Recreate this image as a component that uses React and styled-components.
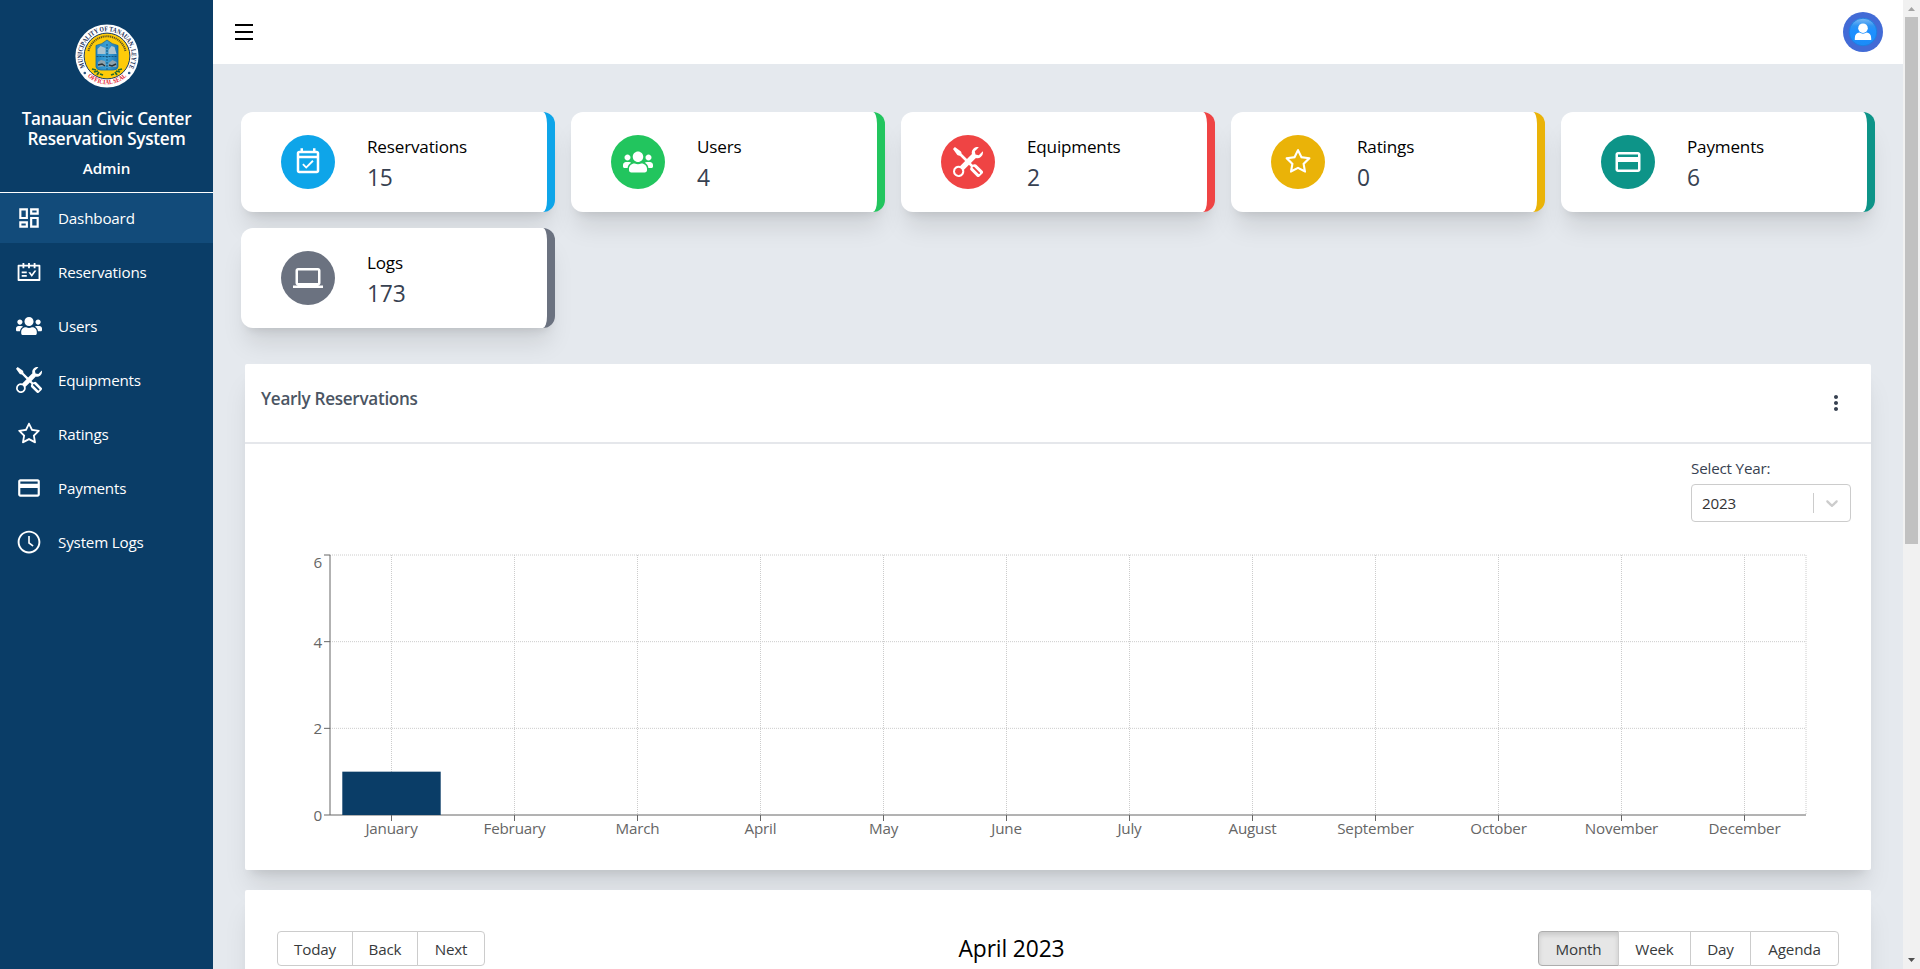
import React from "react";
import styled, { createGlobalStyle, css } from "styled-components";
import { MdOutlineDashboard, MdPayment, MdOutlineEventAvailable, MdLaptop, MdMoreVert } from "react-icons/md";
import { AiOutlineSchedule, AiOutlineStar, AiOutlineClockCircle } from "react-icons/ai";
import { FaUsers } from "react-icons/fa";
import { BsTools } from "react-icons/bs";
import { RiMenuLine } from "react-icons/ri";

const GlobalStyle = createGlobalStyle`
  *, *::before, *::after { box-sizing: border-box; }
  html, body { margin: 0; padding: 0; overflow: hidden; }
  body {
    font-family: "Segoe UI", "Open Sans", "Noto Sans", sans-serif;
    font-size: 15.2px;
    letter-spacing: -0.012em;
    color: #000;
  }
  svg { display: block; flex: none; }
`;

const Page = styled.div`
  display: flex;
  width: 100%;
  height: 969px;
  overflow: hidden;
  background: #e5e9ee;
`;

/* ---------- sidebar ---------- */

const Sidebar = styled.aside`
  flex: none;
  width: 213px;
  background: #0a3d67;
  color: #fff;
`;

const Brand = styled.div`
  display: flex;
  flex-direction: column;
  align-items: center;
  height: 193px;
  padding-top: 24px;
  border-bottom: 1px solid #fff;
  text-align: center;
`;

const BrandName = styled.h1`
  margin: 21px 0 0;
  font-size: 17.1px;
  font-weight: 600;
  line-height: 20px;
  letter-spacing: -0.014em;
`;

const Role = styled.p`
  margin: 7px 0 0;
  font-size: 15.2px;
  font-weight: 600;
  line-height: 24px;
  letter-spacing: -0.004em;
`;

const Nav = styled.nav`
  display: flex;
  flex-direction: column;
  gap: 4px;
`;

const NavItem = styled.a`
  display: flex;
  align-items: center;
  gap: 16px;
  height: 50px;
  padding-left: 16px;
  line-height: 24px;
  background: ${(p) => (p.$active ? "#124b7a" : "transparent")};
`;

/* ---------- top bar ---------- */

const Main = styled.main`
  flex: 1;
  min-width: 0;
  display: flex;
  flex-direction: column;
`;

const TopBar = styled.header`
  flex: none;
  display: flex;
  align-items: center;
  justify-content: space-between;
  height: 64px;
  padding: 0 20px 0 19px;
  background: #fff;
`;

/* ---------- summary cards ---------- */

const Content = styled.section`
  flex: none;
  padding: 48px 28px 0;
`;

const Cards = styled.div`
  display: grid;
  grid-template-columns: repeat(5, 314px);
  gap: 16px;
`;

const Card = styled.article`
  display: flex;
  align-items: flex-start;
  height: 100px;
  padding-left: 40px;
  background: #fff;
  border-right: 8px solid ${(p) => p.$color};
  border-radius: 12px;
  box-shadow: 0 20px 25px -5px rgba(0, 0, 0, 0.1), 0 8px 10px -6px rgba(0, 0, 0, 0.1);
`;

const CardIcon = styled.div`
  display: flex;
  align-items: center;
  justify-content: center;
  width: 54px;
  height: 54px;
  margin-top: 23px;
  border-radius: 50%;
  background: ${(p) => p.$color};
  color: #fff;
`;

const CardText = styled.div`
  padding: 21px 0 0 32px;
`;

const CardLabel = styled.div`
  font-size: 17.1px;
  line-height: 28px;
`;

const CardValue = styled.div`
  font-size: 22.8px;
  line-height: 34px;
  color: #374151;
`;

/* ---------- panels ---------- */

const Panel = styled.section`
  width: 1626px;
  margin: ${(p) => p.$top}px 0 0 4px;
  background: #fff;
  border-radius: 2px;
  box-shadow: 0 20px 25px -5px rgba(0, 0, 0, 0.1), 0 8px 10px -6px rgba(0, 0, 0, 0.1);
`;

const PanelHeader = styled.div`
  display: flex;
  justify-content: space-between;
  height: 80px;
  padding: 21px 23px 0 16px;
  border-bottom: 2px solid #e5e7eb;
`;

const PanelTitle = styled.h2`
  margin: 0;
  font-size: 17.1px;
  font-weight: 600;
  line-height: 28px;
  letter-spacing: -0.017em;
  color: #4b5563;
`;

const MoreButton = styled.div`
  padding-top: 6px;
  color: #374151;
`;

const YearField = styled.div`
  width: 160px;
  margin: 12px 20px 0 auto;
`;

const FieldLabel = styled.div`
  margin-bottom: 4px;
  line-height: 24px;
  color: #374151;
`;

const Select = styled.div`
  display: flex;
  align-items: center;
  height: 38px;
  padding-left: 10px;
  border: 1px solid #ccc;
  border-radius: 4px;
  color: #333;
`;

const SelectValue = styled.span`
  flex: 1;
  line-height: 24px;
`;

const Chevron = styled.div`
  display: flex;
  align-items: center;
  height: 20px;
  padding: 0 8px;
  border-left: 1px solid #ccc;
  color: #ccc;
`;

const Chart = styled.svg`
  font-size: 15.2px;
  letter-spacing: -0.012em;
`;

/* ---------- calendar toolbar ---------- */

const Toolbar = styled.div`
  display: flex;
  justify-content: space-between;
  align-items: center;
  height: 200px;
  padding: 41px 32px 124px;
`;

const CalendarTitle = styled.div`
  font-size: 22.8px;
  line-height: 35px;
  letter-spacing: -0.006em;
`;

const ButtonGroup = styled.div`
  display: flex;
`;

const Button = styled.button`
  width: ${(p) => p.$width}px;
  height: 35px;
  padding: 0;
  border: 1px solid #ccc;
  background: #fff;
  font: inherit;
  letter-spacing: inherit;
  color: #373a3c;
  & + & { margin-left: -1px; }
  &:first-child { border-radius: 4px 0 0 4px; }
  &:last-child { border-radius: 0 4px 4px 0; }
  ${(p) => p.$active && css`
    background: #e6e6e6;
    border-color: #adadad;
    box-shadow: inset 0 3px 5px rgba(0, 0, 0, 0.125);
  `}
`;

/* ---------- scroll bar ---------- */

const ScrollTrack = styled.div`
  flex: none;
  display: flex;
  flex-direction: column;
  align-items: center;
  justify-content: space-between;
  width: 17px;
  padding: 0 2px;
  background: #f1f1f1;
`;

const ScrollThumb = styled.div`
  width: 13px;
  height: 527px;
  margin-bottom: auto;
  background: #c1c1c1;
`;

const Seal = () => (
  <svg width="64" height="64" viewBox="0 0 64 64">
    <defs>
      <path id="ring" d="M13.4 48.2 A24.7 24.7 0 1 1 50.6 48.2" />
      <path id="base" d="M10.5 50.4 A28.3 28.3 0 0 0 53.5 50.4" />
      <linearGradient id="shield" x1="0" x2="1">
        <stop offset="0" stopColor="#2186c4" />
        <stop offset="0.5" stopColor="#3da0d6" />
        <stop offset="1" stopColor="#1a78b4" />
      </linearGradient>
    </defs>
    <circle cx="32" cy="32" r="31.6" fill="#fff" />
    <circle cx="32" cy="32" r="22.9" fill="#fecb09" stroke="#173a63" strokeWidth="1" />
    <text fontFamily="Liberation Serif" fontWeight="700" fontSize="7" fill="#172c55" letterSpacing="0">
      <textPath href="#ring" textLength="101" lengthAdjust="spacingAndGlyphs" startOffset="6">MUNICIPALITY OF TANAUAN, LEYTE</textPath>
    </text>
    <text fontFamily="Liberation Serif" fontWeight="700" fontSize="6.6" fill="#e3202b" letterSpacing="0">
      <textPath href="#base" textLength="43" lengthAdjust="spacingAndGlyphs" startOffset="3">OFFICIAL SEAL</textPath>
    </text>
    <path d="M13.500 27 A19 19 0 0 1 50.500 27" fill="none" stroke="#5f5520" strokeWidth="2" strokeDasharray="1.2 0.7" />
    <path d="M21 21.500 Q27 20.500 32 16 Q37 20.500 43 21.500 V43 Q42.500 46 38 46 H26 Q21.500 46 21 43Z" fill="url(#shield)" stroke="#17689e" strokeWidth="0.8" />
    <path d="M22.500 25l3-3 5 2v6h-8zM33.500 26l3-4 3 1 2 7h-8z" fill="#a9c3d0" />
    <path d="M23 38l3-2 4 1 1 5-8 1zM33.500 39l4-3 4 2v5h-8z" fill="#8fa3ad" />
    <path d="M23 41l4-1 3 2M34 41l3 1 4-2" stroke="#27333a" strokeWidth="1.4" fill="none" />
    <path d="M21.500 32.500H42.500M32 20V46" stroke="#14547f" strokeWidth="1" strokeDasharray="2 1" />
    <path d="M17 45l4 1M19 48l4-1M22 51l2-3M25 50l3 1M47 45l-4 1M45 48l-4-1M42 51l-2-3M39 50l-3 1" stroke="#2b6a2b" strokeWidth="1.800" />
    <circle cx="9.800" cy="49" r="1.300" fill="#2c5685" />
    <circle cx="54.200" cy="49" r="1.300" fill="#2c5685" />
  </svg>
);

const Avatar = () => (
  <svg width="40" height="40" viewBox="0 0 40 40">
    <defs>
      <linearGradient id="gloss" x1="0" x2="0" y1="0" y2="1">
        <stop offset="0" stopColor="#7fbcf5" />
        <stop offset="0.28" stopColor="#2d93f2" />
        <stop offset="0.45" stopColor="#1e90ff" />
        <stop offset="1" stopColor="#1b8cf8" />
      </linearGradient>
    </defs>
    <circle cx="20" cy="20" r="20" fill="#426bd6" />
    <circle cx="20" cy="20" r="13.800" fill="url(#gloss)" stroke="#1c7fe0" strokeWidth="0.900" />
    <circle cx="20" cy="16.200" r="4.800" fill="#fff" />
    <path d="M11.800 28v-1.800c0-3.600 2-5.500 4.600-5.700 2.200 1.500 5 1.500 7.200 0 2.600.2 4.600 2.100 4.600 5.700V28z" fill="#fff" />
  </svg>
);

const ChevronIcon = () => (
  <svg width="20" height="20" viewBox="0 0 20 20" fill="currentColor">
    <path d="M4.516 7.548c0.436-0.446 1.043-0.481 1.576 0l3.908 3.747 3.908-3.747c0.533-0.481 1.141-0.446 1.574 0 0.436 0.445 0.408 1.197 0 1.615-0.406 0.418-4.695 4.502-4.695 4.502-0.217 0.223-0.502 0.335-0.787 0.335s-0.570-0.112-0.789-0.335c0 0-4.287-4.084-4.695-4.502s-0.436-1.170 0-1.615z" />
  </svg>
);

const MONTHS = ["January", "February", "March", "April", "May", "June", "July", "August", "September", "October", "November", "December"];
const RESERVATIONS = [1, 0, 0, 0, 0, 0, 0, 0, 0, 0, 0, 0];
const PLOT = { left: 85, right: 1561, top: 33, bottom: 293, max: 6 };

const YearlyChart = () => {
  const band = (PLOT.right - PLOT.left) / MONTHS.length;
  const y = (v) => PLOT.bottom - (v * (PLOT.bottom - PLOT.top)) / PLOT.max;
  const center = (i) => PLOT.left + band * (i + 0.5);
  return (
    <Chart width="1626" height="348">
      <g stroke="#ccc" strokeDasharray="1 1">
        {[2, 4, 6].map((v) => <line key={v} x1={PLOT.left} x2={PLOT.right} y1={y(v)} y2={y(v)} />)}
        {MONTHS.map((m, i) => <line key={m} x1={center(i)} x2={center(i)} y1={PLOT.top} y2={PLOT.bottom} />)}
        <line x1={PLOT.right} x2={PLOT.right} y1={PLOT.top} y2={PLOT.bottom} />
      </g>
      <g stroke="#666">
        <line x1={PLOT.left} x2={PLOT.right} y1={PLOT.bottom} y2={PLOT.bottom} />
        <line x1={PLOT.left} x2={PLOT.left} y1={PLOT.top} y2={PLOT.bottom} />
        {[0, 2, 4, 6].map((v) => <line key={v} x1={PLOT.left - 6} x2={PLOT.left} y1={y(v)} y2={y(v)} />)}
        {MONTHS.map((m, i) => <line key={m} x1={center(i)} x2={center(i)} y1={PLOT.bottom} y2={PLOT.bottom + 6} />)}
      </g>
      {RESERVATIONS.map((v, i) => v > 0 && (
        <rect key={i} x={center(i) - band * 0.4} y={y(v)} width={band * 0.8} height={PLOT.bottom - y(v)} fill="#0a3d67" />
      ))}
      <g fill="#666" textAnchor="end">
        {[0, 2, 4, 6].map((v) => <text key={v} x={PLOT.left - 8} y={v === 6 ? 46 : y(v) + 6}>{v}</text>)}
      </g>
      <g fill="#666" textAnchor="middle">
        {MONTHS.map((m, i) => <text key={m} x={center(i)} y="312">{m}</text>)}
      </g>
    </Chart>
  );
};

const NAV = [
  ["Dashboard", MdOutlineDashboard],
  ["Reservations", AiOutlineSchedule],
  ["Users", FaUsers],
  ["Equipments", BsTools],
  ["Ratings", AiOutlineStar],
  ["Payments", MdPayment],
  ["System Logs", AiOutlineClockCircle],
];

const CARDS = [
  ["Reservations", 15, "#0ea5e9", MdOutlineEventAvailable],
  ["Users", 4, "#22c55e", FaUsers],
  ["Equipments", 2, "#ef4444", BsTools],
  ["Ratings", 0, "#eab308", AiOutlineStar],
  ["Payments", 6, "#0d9488", MdPayment],
  ["Logs", 173, "#6b7280", MdLaptop],
];

export default function App() {
  return (
    <Page>
      <GlobalStyle />
      <Sidebar>
        <Brand>
          <Seal />
          <BrandName>Tanauan Civic Center<br />Reservation System</BrandName>
          <Role>Admin</Role>
        </Brand>
        <Nav>
          {NAV.map(([label, Icon], i) => (
            <NavItem key={label} $active={i === 0}>
              <Icon size={26} />
              <span>{label}</span>
            </NavItem>
          ))}
        </Nav>
      </Sidebar>
      <Main>
        <TopBar>
          <RiMenuLine size={24} />
          <Avatar />
        </TopBar>
        <Content>
          <Cards>
            {CARDS.map(([label, value, color, Icon]) => (
              <Card key={label} $color={color}>
                <CardIcon $color={color}><Icon size={30} /></CardIcon>
                <CardText>
                  <CardLabel>{label}</CardLabel>
                  <CardValue>{value}</CardValue>
                </CardText>
              </Card>
            ))}
          </Cards>
          <Panel $top={36}>
            <PanelHeader>
              <PanelTitle>Yearly Reservations</PanelTitle>
              <MoreButton><MdMoreVert size={24} /></MoreButton>
            </PanelHeader>
            <YearField>
              <FieldLabel>Select Year:</FieldLabel>
              <Select>
                <SelectValue>2023</SelectValue>
                <Chevron><ChevronIcon /></Chevron>
              </Select>
            </YearField>
            <YearlyChart />
          </Panel>
          <Panel $top={20}>
            <Toolbar>
              <ButtonGroup>
                <Button $width={76}>Today</Button>
                <Button $width={66}>Back</Button>
                <Button $width={68}>Next</Button>
              </ButtonGroup>
              <CalendarTitle>April 2023</CalendarTitle>
              <ButtonGroup>
                <Button $width={81} $active>Month</Button>
                <Button $width={73}>Week</Button>
                <Button $width={61}>Day</Button>
                <Button $width={89}>Agenda</Button>
              </ButtonGroup>
            </Toolbar>
          </Panel>
        </Content>
      </Main>
      <ScrollTrack>
        <svg width="13" height="17"><path d="M3 11h7L6.500 7z" fill="#a3a3a3" /></svg>
        <ScrollThumb />
        <svg width="13" height="17"><path d="M3 6h7L6.500 10z" fill="#505050" /></svg>
      </ScrollTrack>
    </Page>
  );
}
